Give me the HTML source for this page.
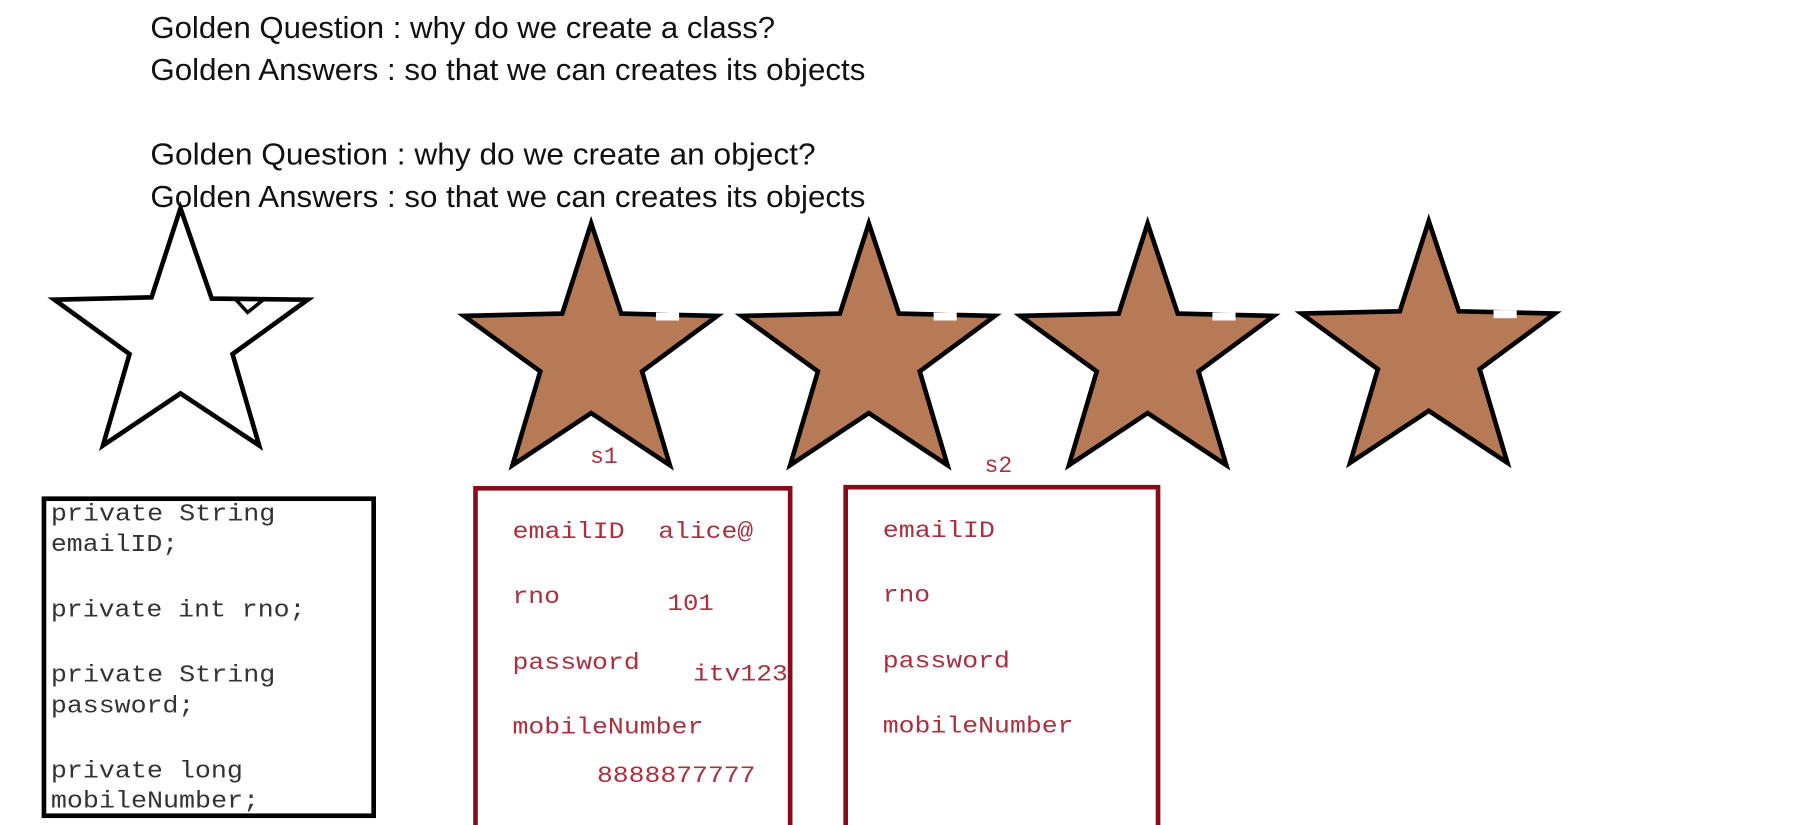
<!DOCTYPE html>
<html><head><meta charset="utf-8"><style>
html,body{margin:0;padding:0;background:#fff;width:1814px;height:825px;overflow:hidden}
svg{display:block}
.t{font-family:"Liberation Sans",sans-serif;font-size:26px;fill:#111}
.m{font-family:"Liberation Mono",monospace;font-size:21px;fill:#333}
.r{font-family:"Liberation Mono",monospace;font-size:20px;fill:#a8303f}
</style></head><body>
<svg width="1814" height="825" viewBox="0 0 1568 713" preserveAspectRatio="none">
<rect width="1568" height="713" fill="#fff"/>
<text class="t" x="130" y="33" textLength="540" lengthAdjust="spacingAndGlyphs">Golden Question : why do we create a class?</text>
<text class="t" x="130" y="69" textLength="618" lengthAdjust="spacingAndGlyphs">Golden Answers : so that we can creates its objects</text>
<text class="t" x="130" y="142" textLength="575" lengthAdjust="spacingAndGlyphs">Golden Question : why do we create an object?</text>
<text class="t" x="130" y="179" textLength="618" lengthAdjust="spacingAndGlyphs">Golden Answers : so that we can creates its objects</text>

<polygon points="156,180 183,258 266,259 201,306 224,385 156,340 89,385 112,306 47,259 131,257" fill="#fff" stroke="#000" stroke-width="4" stroke-linejoin="miter"/>
<path d="M203,258 L214,270 L229,258" fill="none" stroke="#000" stroke-width="3"/>

<g id="s" >
<polygon points="511,193 537,271 620,273 555,321 579,402 511,357 443,402 467,321 401,273 486,271" fill="#b77a56" stroke="#000" stroke-width="4"/>
<rect x="567" y="270" width="20" height="7" fill="#fff"/>
</g>
<use href="#s" x="240" y="0"/>
<use href="#s" x="481" y="0"/>
<use href="#s" x="724" y="-2"/>

<rect x="38" y="431" width="285" height="274" fill="#fff" stroke="#000" stroke-width="4"/>
<g class="m">
<text x="44" y="450" textLength="194" lengthAdjust="spacingAndGlyphs">private String</text>
<text x="44" y="476" textLength="110" lengthAdjust="spacingAndGlyphs">emailID;</text>
<text x="44" y="533" textLength="220" lengthAdjust="spacingAndGlyphs">private int rno;</text>
<text x="44" y="589" textLength="194" lengthAdjust="spacingAndGlyphs">private String</text>
<text x="44" y="616" textLength="124" lengthAdjust="spacingAndGlyphs">password;</text>
<text x="44" y="672" textLength="166" lengthAdjust="spacingAndGlyphs">private long</text>
<text x="44" y="698" textLength="180" lengthAdjust="spacingAndGlyphs">mobileNumber;</text>
</g>

<path d="M411,716 L411,422 L683,422 L683,716" fill="none" stroke="#8b0a1a" stroke-width="4"/>
<path d="M731,716 L731,421 L1001,421 L1001,716" fill="none" stroke="#8b0a1a" stroke-width="4"/>
<g class="r">
<text x="510" y="400">s1</text>
<text x="851" y="408">s2</text>
<text x="443" y="465" textLength="97" lengthAdjust="spacingAndGlyphs">emailID</text>
<text x="569" y="465" textLength="82" lengthAdjust="spacingAndGlyphs">alice@</text>
<text x="443" y="521" textLength="41" lengthAdjust="spacingAndGlyphs">rno</text>
<text x="577" y="527" textLength="40" lengthAdjust="spacingAndGlyphs">101</text>
<text x="443" y="578" textLength="110" lengthAdjust="spacingAndGlyphs">password</text>
<text x="599" y="588" textLength="82" lengthAdjust="spacingAndGlyphs">itv123</text>
<text x="443" y="634" textLength="165" lengthAdjust="spacingAndGlyphs">mobileNumber</text>
<text x="516" y="676" textLength="137" lengthAdjust="spacingAndGlyphs">8888877777</text>
<text x="763" y="464" textLength="97" lengthAdjust="spacingAndGlyphs">emailID</text>
<text x="763" y="520" textLength="41" lengthAdjust="spacingAndGlyphs">rno</text>
<text x="763" y="577" textLength="110" lengthAdjust="spacingAndGlyphs">password</text>
<text x="763" y="633" textLength="165" lengthAdjust="spacingAndGlyphs">mobileNumber</text>
</g>
</svg>
</body></html>
